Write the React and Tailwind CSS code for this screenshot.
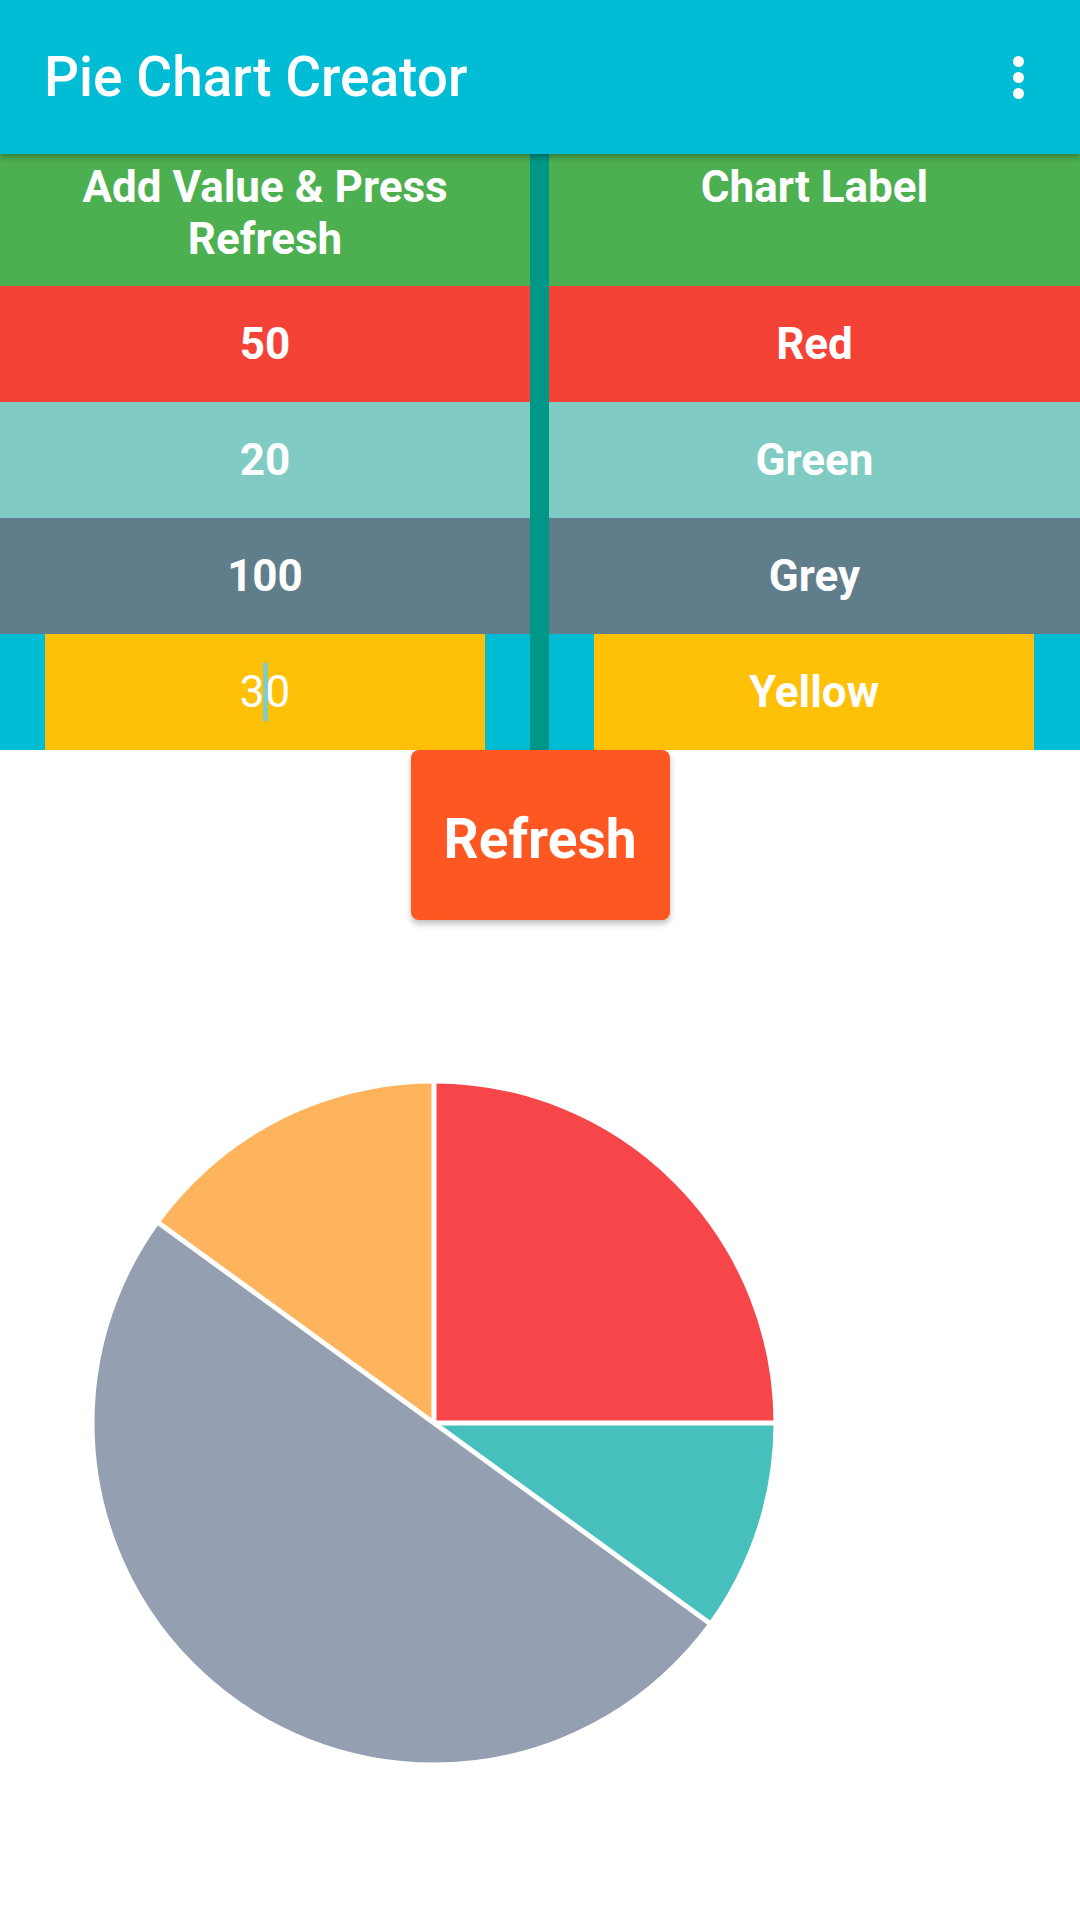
import React from "react";

const CX = 345;
const CY = 345;
const R = 342;
function pt(deg) {
  const a = (deg * Math.PI) / 180;
  return [CX + R * Math.sin(a), CY - R * Math.cos(a)];
}
function slice(a0, a1) {
  const [x0, y0] = pt(a0);
  const mid = (a0 + a1) / 2;
  const [xm, ym] = pt(mid);
  const [x1, y1] = pt(a1);
  return `M${CX} ${CY} L${x0.toFixed(2)} ${y0.toFixed(2)} A${R} ${R} 0 0 1 ${xm.toFixed(2)} ${ym.toFixed(2)} A${R} ${R} 0 0 1 ${x1.toFixed(2)} ${y1.toFixed(2)} Z`;
}

const data = [
  { v: 50, c: "#F7464A" },
  { v: 20, c: "#46BFBD" },
  { v: 100, c: "#949FB1" },
  { v: 30, c: "#FDB45C" },
];

function Pie() {
  const total = data.reduce((s, d) => s + d.v, 0);
  let acc = 0;
  const paths = [];
  const lines = [];
  data.forEach((d, i) => {
    const a0 = (acc / total) * 360;
    acc += d.v;
    const a1 = (acc / total) * 360;
    paths.push(<path key={i} d={slice(a0, a1)} fill={d.c} />);
    const [x, y] = pt(a0);
    lines.push(
      <line key={"l" + i} x1={CX} y1={CY} x2={x} y2={y} stroke="#fff" strokeWidth="5" />
    );
  });
  return (
    <svg width="690" height="690" viewBox="0 0 690 690">
      {paths}
      {lines}
      <circle cx={CX} cy={CY} r={R} fill="none" stroke="#fff" strokeWidth="5" />
    </svg>
  );
}

function Cell({ bg, children, bold = true }) {
  return (
    <div
      className={`h-[116px] flex items-center justify-center text-[44px] leading-[52px] text-white ${
        bold ? "font-bold" : "font-normal"
      } ${bg}`}
    >
      {children}
    </div>
  );
}

export default function App() {
  return (
    <div className="w-[1080px] min-h-[1920px] bg-white font-['Roboto',sans-serif] overflow-hidden">
      <div className="relative z-10 h-[154px] bg-[#00BCD4] flex items-center justify-between pl-[44px] pr-[56px] shadow-[0_3px_6px_rgba(0,0,0,0.3)]">
        <div className="text-[55px] font-medium text-white leading-none">Pie Chart Creator</div>
        <div className="flex flex-col gap-[5px]">
          <div className="w-[11px] h-[11px] rounded-full bg-white" />
          <div className="w-[11px] h-[11px] rounded-full bg-white" />
          <div className="w-[11px] h-[11px] rounded-full bg-white" />
        </div>
      </div>

      <div className="flex">
        <div className="w-[530px]">
          <div className="h-[132px] bg-[#4CAF50] pt-[7px] text-center text-[44px] leading-[52px] font-bold text-white">
            Add Value &amp; Press
            <br />
            Refresh
          </div>
          <Cell bg="bg-[#F44336]">50</Cell>
          <Cell bg="bg-[#80CBC4]">20</Cell>
          <Cell bg="bg-[#607D8B]">100</Cell>
          <div className="h-[116px] bg-[#00BCD4] px-[45px]">
            <div className="h-full bg-[#FFC107] flex items-center justify-center text-[44px] leading-[52px] text-white font-normal">
              <span>3</span>
              <span className="w-[5px] h-[58px] bg-[#80CBC4] mx-[-2px] relative z-0" />
              <span className="relative z-10">0</span>
            </div>
          </div>
        </div>
        <div className="w-[19px] bg-[#009688]" />
        <div className="flex-1">
          <div className="h-[132px] bg-[#4CAF50] pt-[7px] text-center text-[44px] leading-[52px] font-bold text-white">
            Chart Label
          </div>
          <Cell bg="bg-[#F44336]">Red</Cell>
          <Cell bg="bg-[#80CBC4]">Green</Cell>
          <Cell bg="bg-[#607D8B]">Grey</Cell>
          <div className="h-[116px] bg-[#00BCD4] pl-[45px] pr-[46px]">
            <div className="h-full bg-[#FFC107] flex items-center justify-center text-[44px] leading-[52px] text-white font-bold">
              Yellow
            </div>
          </div>
        </div>
      </div>

      <div className="flex justify-center">
        <div className="w-[259px] h-[170px] pt-[8px] bg-[#FF5722] rounded-[8px] shadow-[0_4px_6px_rgba(0,0,0,0.25)] flex items-center justify-center text-[55px] font-bold text-white">
          Refresh
        </div>
      </div>

      <div className="mt-[158px] ml-[89px]">
        <Pie />
      </div>
    </div>
  );
}
